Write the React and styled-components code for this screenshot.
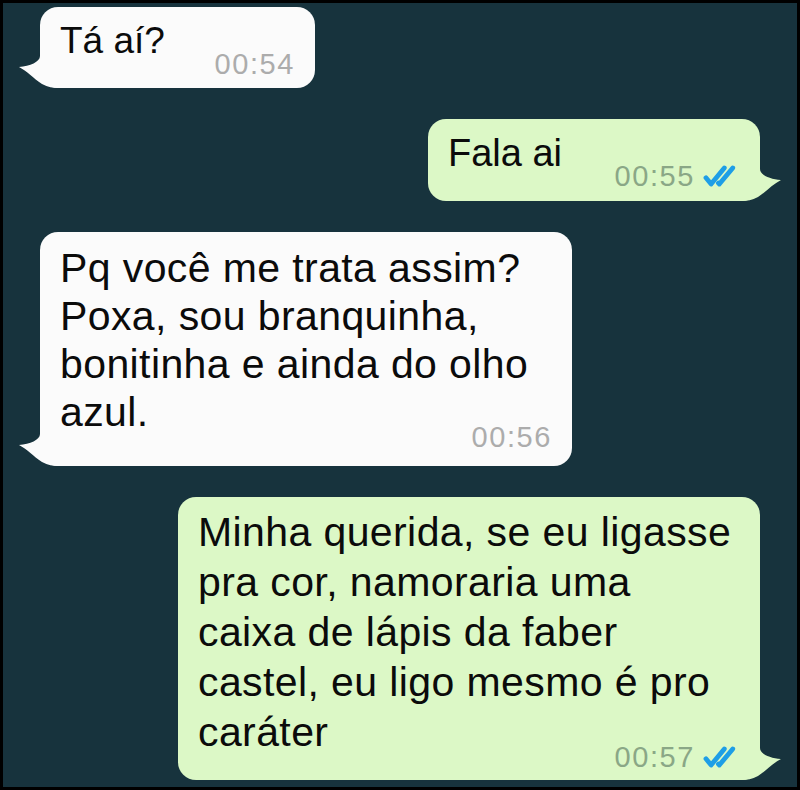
import styled, { createGlobalStyle } from 'styled-components'

const GlobalStyle = createGlobalStyle`
  html, body {
    margin: 0;
    padding: 0;
    background: #000;
  }
`

const Frame = styled.div`
  box-sizing: border-box;
  width: 800px;
  height: 790px;
  border: 3px solid #000;
  background: #17333d;
  padding: 4px 37px 0 37px;
  display: flex;
  flex-direction: column;
  gap: 31px;
  font-family: "Liberation Sans", Arial, sans-serif;
  overflow: hidden;
`

const Row = styled.div`
  display: flex;
  justify-content: ${p => (p.$out ? 'flex-end' : 'flex-start')};
`

const Bubble = styled.div`
  position: relative;
  box-sizing: border-box;
  width: ${p => p.$width}px;
  padding: ${p => p.$top}px 20px ${p => p.$bottom}px 20px;
  border-radius: 18px;
  background: ${p => (p.$out ? '#dcf8c6' : '#fbfbfb')};
  display: flex;
  flex-direction: column;
`

const Text = styled.div`
  font-size: ${p => p.$size}px;
  line-height: ${p => p.$lh}px;
  letter-spacing: ${p => p.$track}px;
  color: #0b0b0b;
`

const Meta = styled.div`
  align-self: flex-end;
  display: flex;
  align-items: center;
  gap: 7px;
  margin-top: ${p => p.$lift}px;
  font-size: 29px;
  line-height: 30px;
  letter-spacing: 1.6px;
  color: ${p => (p.$out ? '#8aa786' : '#acacac')};
`

const Tail = styled.svg`
  position: absolute;
  bottom: 0;
  width: 40px;
  height: 32px;
  ${p => (p.$out ? 'right: -22px; transform: scaleX(-1);' : 'left: -22px;')}
`

const TailShape = ({ out }) => (
  <Tail $out={out} viewBox="0 0 40 32">
    <path
      d="M22 0 C22 6 12 10 1 11 C9 15 15 22 24 28 C30 31 35 32 40 32 L40 0 Z"
      fill={out ? '#dcf8c6' : '#fbfbfb'}
    />
  </Tail>
)

const Ticks = () => (
  <svg width="38" height="22" viewBox="0 0 20 12">
    <g fill="none" stroke="#1e9ee6" strokeWidth="2.6" strokeLinecap="round" strokeLinejoin="round">
      <path d="M1.8 7 L4.6 10.4 L11.8 1.6" />
      <path d="M8.6 9.9 L9.1 10.4 L16.4 1.6" />
    </g>
  </svg>
)

const messages = [
  { out: false, width: 275, top: 10, bottom: 9, size: 37, lh: 48, track: 0, lift: -16, lines: ['Tá aí?'], time: '00:54' },
  { out: true, width: 332, top: 10, bottom: 10, size: 38, lh: 48, track: 0, lift: -16, lines: ['Fala ai'], time: '00:55' },
  {
    out: false, width: 532, top: 12, bottom: 14, size: 41, lh: 48, track: 0.4, lift: -14,
    lines: ['Pq você me trata assim?', 'Poxa, sou branquinha,', 'bonitinha e ainda do olho', 'azul.'],
    time: '00:56',
  },
  {
    out: true, width: 582, top: 10, bottom: 8, size: 41, lh: 50, track: 0.4, lift: -15,
    lines: ['Minha querida, se eu ligasse', 'pra cor, namoraria uma', 'caixa de lápis da faber', 'castel, eu ligo mesmo é pro', 'caráter'],
    time: '00:57',
  },
]

export default function App() {
  return (
    <>
      <GlobalStyle />
      <Frame>
        {messages.map(m => (
          <Row key={m.time} $out={m.out}>
            <Bubble $out={m.out} $width={m.width} $top={m.top} $bottom={m.bottom}>
              <TailShape out={m.out} />
              <Text $size={m.size} $lh={m.lh} $track={m.track}>
                {m.lines.map((l, i) => (
                  <div key={i}>{l}</div>
                ))}
              </Text>
              <Meta $out={m.out} $lift={m.lift}>
                {m.time}
                {m.out && <Ticks />}
              </Meta>
            </Bubble>
          </Row>
        ))}
      </Frame>
    </>
  )
}
